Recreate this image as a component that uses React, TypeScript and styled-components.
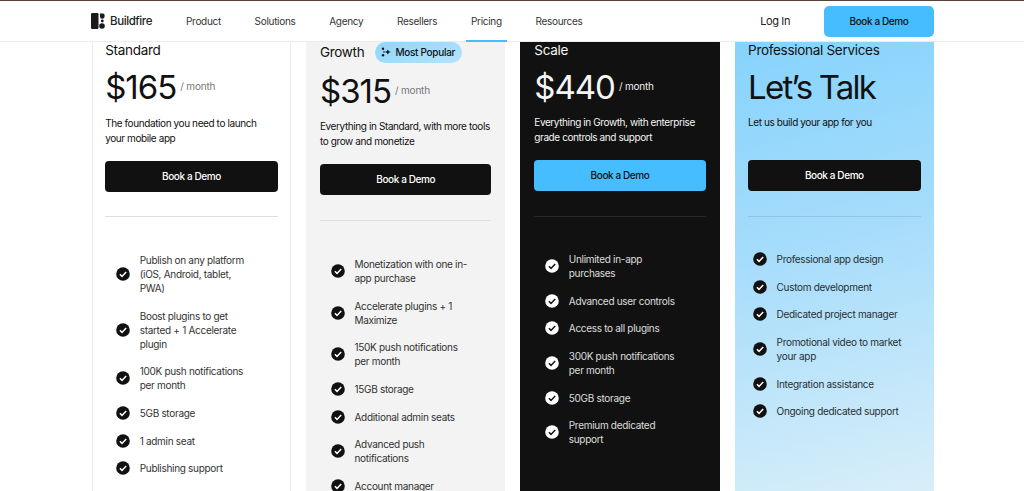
import React from "react";
import styled, { createGlobalStyle } from "styled-components";

const GlobalStyle = createGlobalStyle`
  html, body {
    margin: 0;
    padding: 0;
    background: #fff;
    font-family: "Inter", "Liberation Sans", sans-serif;
    color: #111;
  }
`;

const Page = styled.div`
  width: 1024px;
  height: 491px;
  overflow: hidden;
`;

const Header = styled.header`
  height: 42px;
  box-sizing: border-box;
  border-top: 1px solid #5a4238;
  border-bottom: 1px solid #ececec;
  display: flex;
  align-items: center;
  padding: 0 90px 0 91px;
`;

const Brand = styled.div`
  display: flex;
  align-items: center;
  gap: 5px;
  font-size: 11.5px;
  font-weight: 500;
  letter-spacing: -0.4px;
  color: #222;
  width: 95px;
`;

const NavList = styled.nav`
  display: flex;
  align-items: center;
  gap: 33.7px;
  height: 100%;
`;

const NavItem = styled.a<{ $active?: boolean }>`
  position: relative;
  font-size: 10px;
  letter-spacing: -0.3px;
  color: #333;
  line-height: 40px;

  ${(p) =>
    p.$active &&
    `
    &::after {
      content: "";
      position: absolute;
      left: -5px;
      right: -5px;
      bottom: -1px;
      height: 2px;
      background: #45bdff;
    }
  `}
`;

const HeaderRight = styled.div`
  margin-left: auto;
  display: flex;
  align-items: center;
  gap: 34px;
`;

const LogIn = styled.a`
  font-size: 11px;
  letter-spacing: -0.4px;
  color: #222;
`;

const DemoLink = styled.a`
  width: 110px;
  height: 31px;
  border-radius: 5px;
  background: #45bdff;
  font-size: 10px;
  font-weight: 500;
  letter-spacing: -0.4px;
  color: #111;
  display: flex;
  align-items: center;
  justify-content: center;
`;

const Plans = styled.main`
  display: grid;
  grid-template-columns: repeat(4, 199.5px);
  column-gap: 14.8px;
  padding-left: 91.7px;
  align-items: start;
`;

type Tone = "plain" | "grey" | "dark" | "blue";

const Card = styled.section<{ $tone: Tone }>`
  height: 460px;
  box-sizing: border-box;
  padding: 0 14px;
  ${(p) => p.$tone === "plain" && "border: 1px solid #ececec; border-top: 0; padding: 0 12.5px;"}
  ${(p) => p.$tone === "grey" && "background: #f3f3f3;"}
  ${(p) => p.$tone === "dark" && "background: #111; color: #f5f5f5;"}
  ${(p) =>
    p.$tone === "blue" &&
    "padding: 0 13.5px; background: linear-gradient(165deg, #86d3fd 0%, #a5dcfb 42%, #daeff9 100%);"}
`;

const TitleRow = styled.div<{ $tall?: boolean }>`
  display: flex;
  align-items: center;
  gap: 11px;
  height: ${(p) => (p.$tall ? "20px" : "16px")};
`;

const Title = styled.h3`
  margin: 0;
  font-size: 13.5px;
  font-weight: 400;
  letter-spacing: -0.3px;
`;

const Badge = styled.span`
  height: 21px;
  padding: 0 7px 0 6px;
  border-radius: 11px;
  background: linear-gradient(160deg, #8fd6fd, #b5e3fc);
  display: flex;
  align-items: center;
  gap: 4px;
  font-size: 10px;
  font-weight: 500;
  letter-spacing: -0.3px;
  color: #111;
`;

const PriceRow = styled.div`
  display: flex;
  align-items: baseline;
  gap: 4px;
  margin-top: 7px;
  height: 44px;
`;

const Price = styled.span<{ $tight?: boolean }>`
  font-size: 33px;
  font-weight: 400;
  letter-spacing: ${(p) => (p.$tight ? "-1.8px" : "-1px")};
  line-height: 44px;
`;

const Per = styled.span<{ $light?: boolean }>`
  font-size: 10px;
  letter-spacing: -0.2px;
  color: ${(p) => (p.$light ? "#eee" : "#777")};
  position: relative;
  top: -9px;
`;

const Desc = styled.p<{ $lift?: boolean }>`
  margin: ${(p) => (p.$lift ? "5.5px" : "6.5px")} 0 0;
  height: 36px;
  font-size: 10px;
  letter-spacing: -0.4px;
  line-height: 15px;
`;

const CardButton = styled.a<{ $accent?: boolean }>`
  display: flex;
  align-items: center;
  justify-content: center;
  height: 31px;
  margin-top: 9px;
  border-radius: 4px;
  font-size: 10px;
  font-weight: 500;
  letter-spacing: -0.4px;
  background: ${(p) => (p.$accent ? "#45bdff" : "#111")};
  color: ${(p) => (p.$accent ? "#111" : "#fff")};
`;

const Divider = styled.hr<{ $tone: Tone }>`
  border: 0;
  height: 1px;
  margin: ${(p) => (p.$tone === "plain" ? "24px" : "25px")} 0 0;
  background: ${(p) =>
    p.$tone === "dark" ? "#2a2a2a" : p.$tone === "blue" ? "rgba(0, 0, 0, 0.1)" : "#dedede"};
`;

const Features = styled.ul<{ $flush?: boolean; $lift?: boolean }>`
  list-style: none;
  margin: ${(p) => (p.$lift ? "35.5px" : "36.5px")} 0 0;
  padding: 0 0 0 ${(p) => (p.$flush ? "5px" : "11px")};
  display: flex;
  flex-direction: column;
  gap: 13.7px;
`;

const Feature = styled.li`
  display: flex;
  align-items: center;
  gap: 9.5px;
  font-size: 10px;
  letter-spacing: -0.3px;
  line-height: 14px;
`;

const FeatureText = styled.span`
  opacity: 0.88;
`;

function LogoMark() {
  return (
    <svg width="14" height="16" viewBox="0 0 14 16" fill="#1a1a1a">
      <rect x="0" y="0" width="7.5" height="16" rx="1.2" />
      <path d="M9 0.5 h3 a1.6 1.6 0 0 1 1.6 1.6 v1 a2.6 2.6 0 0 1-2.6 2.6 a2 2 0 0 1-2-2 z" />
      <circle cx="11.3" cy="8" r="1.4" />
      <circle cx="11" cy="13" r="2.8" />
    </svg>
  );
}

function Sparkle() {
  return (
    <svg width="10" height="10" viewBox="0 0 10 10" fill="#111">
      <path d="M6.8 2.6 l1 1.7 2 .7 -2 .7 -1 1.7 -1-1.7 -2-.7 2-.7 z" />
      <circle cx="2" cy="1.8" r="1.2" />
      <circle cx="3" cy="5" r="0.8" />
      <circle cx="2" cy="8.2" r="1.2" />
    </svg>
  );
}

function CheckBadge({ inverted }: { inverted?: boolean }) {
  const bg = inverted ? "#fff" : "#111";
  const fg = inverted ? "#111" : "#fff";
  return (
    <svg width="14" height="14" viewBox="0 0 14 14" style={{ flex: "none" }}>
      <circle cx="7" cy="7" r="6.8" fill={bg} />
      <path d="M3.9 7.3 L6 9.4 L10.2 4.9" fill="none" stroke={fg} strokeWidth="1.5" />
    </svg>
  );
}

type Plan = {
  tone: Tone;
  title: string;
  price: string;
  desc: string;
  features: React.ReactNode[];
};

const plans: Plan[] = [
  {
    tone: "plain",
    title: "Standard",
    price: "$165",
    desc: "The foundation you need to launch your mobile app",
    features: [
      <>Publish on any platform<br />(iOS, Android, tablet,<br />PWA)</>,
      <>Boost plugins to get<br />started + 1 Accelerate<br />plugin</>,
      <>100K push notifications<br />per month</>,
      "5GB storage",
      "1 admin seat",
      "Publishing support",
    ],
  },
  {
    tone: "grey",
    title: "Growth",
    price: "$315",
    desc: "Everything in Standard, with more tools to grow and monetize",
    features: [
      <>Monetization with one in-<br />app purchase</>,
      <>Accelerate plugins + 1<br />Maximize</>,
      <>150K push notifications<br />per month</>,
      "15GB storage",
      "Additional admin seats",
      <>Advanced push<br />notifications</>,
      "Account manager",
    ],
  },
  {
    tone: "dark",
    title: "Scale",
    price: "$440",
    desc: "Everything in Growth, with enterprise grade controls and support",
    features: [
      <>Unlimited in-app<br />purchases</>,
      "Advanced user controls",
      "Access to all plugins",
      <>300K push notifications<br />per month</>,
      "50GB storage",
      <>Premium dedicated<br />support</>,
    ],
  },
  {
    tone: "blue",
    title: "Professional Services",
    price: "Let’s Talk",
    desc: "Let us build your app for you",
    features: [
      "Professional app design",
      "Custom development",
      "Dedicated project manager",
      <>Promotional video to market<br />your app</>,
      "Integration assistance",
      "Ongoing dedicated support",
    ],
  },
];

export default function App() {
  return (
    <Page>
      <GlobalStyle />
      <Header>
        <Brand>
          <LogoMark />
          Buildfire
        </Brand>
        <NavList>
          <NavItem>Product</NavItem>
          <NavItem>Solutions</NavItem>
          <NavItem>Agency</NavItem>
          <NavItem>Resellers</NavItem>
          <NavItem $active>Pricing</NavItem>
          <NavItem>Resources</NavItem>
        </NavList>
        <HeaderRight>
          <LogIn>Log In</LogIn>
          <DemoLink>Book a Demo</DemoLink>
        </HeaderRight>
      </Header>
      <Plans>
        {plans.map((plan) => {
          const lift = plan.tone === "dark" || plan.tone === "blue";
          return (
            <Card key={plan.title} $tone={plan.tone}>
              <TitleRow $tall={plan.tone === "grey"}>
                <Title>{plan.title}</Title>
                {plan.tone === "grey" && (
                  <Badge>
                    <Sparkle />
                    Most Popular
                  </Badge>
                )}
              </TitleRow>
              <PriceRow>
                <Price $tight={plan.tone === "blue"}>{plan.price}</Price>
                {plan.tone !== "blue" && <Per $light={plan.tone === "dark"}>/ month</Per>}
              </PriceRow>
              <Desc $lift={plan.tone !== "plain"}>{plan.desc}</Desc>
              <CardButton $accent={plan.tone === "dark"}>Book a Demo</CardButton>
              <Divider $tone={plan.tone} />
              <Features $flush={plan.tone === "blue"} $lift={lift}>
                {plan.features.map((f, i) => (
                  <Feature key={i}>
                    <CheckBadge inverted={plan.tone === "dark"} />
                    <FeatureText>{f}</FeatureText>
                  </Feature>
                ))}
              </Features>
            </Card>
          );
        })}
      </Plans>
    </Page>
  );
}
